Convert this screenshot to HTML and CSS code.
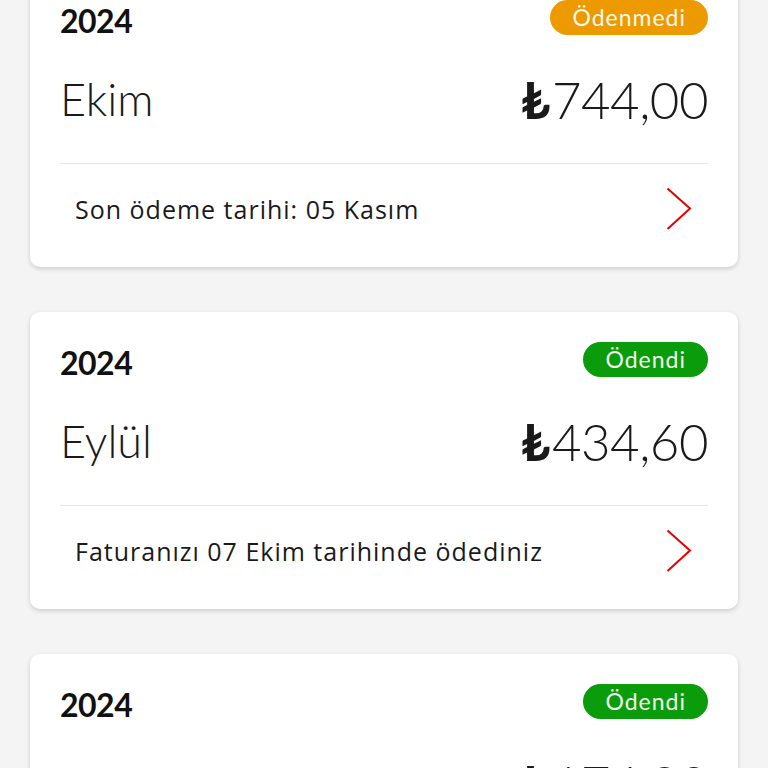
FILE: index.html
```html
<!DOCTYPE html>
<html lang="tr">
<head>
<meta charset="utf-8">
<title>Faturalar</title>
<link rel="stylesheet" href="styles.css">
</head>
<body>
<div class="list">
  <div class="card">
    <div class="head">
      <span class="year">2024</span>
      <span class="badge unpaid">Ödenmedi</span>
    </div>
    <div class="main">
      <span class="month">Ekim</span>
      <span class="amount"><b class="cur">₺</b>744,00</span>
    </div>
    <div class="foot">
      <span class="note">Son ödeme tarihi: 05 Kasım</span>
      <svg class="chev" width="26" height="44" viewBox="0 0 26 44"><path d="M1.5 1.5 L24 21.5 L1.5 42" fill="none" stroke="#e60000" stroke-width="2"/></svg>
    </div>
  </div>
  <div class="card">
    <div class="head">
      <span class="year">2024</span>
      <span class="badge paid">Ödendi</span>
    </div>
    <div class="main">
      <span class="month">Eylül</span>
      <span class="amount"><b class="cur">₺</b>434,60</span>
    </div>
    <div class="foot">
      <span class="note">Faturanızı 07 Ekim tarihinde ödediniz</span>
      <svg class="chev" width="26" height="44" viewBox="0 0 26 44"><path d="M1.5 1.5 L24 21.5 L1.5 42" fill="none" stroke="#e60000" stroke-width="2"/></svg>
    </div>
  </div>
  <div class="card">
    <div class="head">
      <span class="year">2024</span>
      <span class="badge paid">Ödendi</span>
    </div>
    <div class="main">
      <span class="month">Ağustos</span>
      <span class="amount"><b class="cur">₺</b>174,90</span>
    </div>
    <div class="foot">
      <span class="note">Faturanızı 06 Eylül tarihinde ödediniz</span>
      <svg class="chev" width="26" height="44" viewBox="0 0 26 44"><path d="M1.5 1.5 L24 21.5 L1.5 42" fill="none" stroke="#e60000" stroke-width="2"/></svg>
    </div>
  </div>
</div>
</body>
</html>
```
FILE: styles.css
```css
html, body {
  margin: 0;
  padding: 0;
  background: #f4f4f4;
  font-family: Lato, "Open Sans", "DejaVu Sans", sans-serif;
  color: #1a1a1a;
  overflow: hidden;
}
.list {
  display: flex;
  flex-direction: column;
  gap: 45px;
  padding: 0 30px;
  margin-top: -30px;
}
.card {
  background: #fff;
  border-radius: 10px;
  box-shadow: 0 2px 5px rgba(0, 0, 0, 0.16);
  padding: 30px 30px 14px;
}
.head {
  display: flex;
  justify-content: space-between;
  align-items: center;
  height: 35px;
}
.year {
  font-size: 32px;
  font-weight: 700;
  letter-spacing: -0.5px;
  padding-top: 5px;
  color: #111;
}
.badge {
  height: 35px;
  line-height: 34px;
  border-radius: 18px;
  padding: 0 22px;
  font-size: 23px;
  letter-spacing: 1px;
  color: #f2f7ee;
}
.unpaid { background: #ec9a00; }
.paid { background: #0a9c0a; }
.main {
  display: flex;
  justify-content: space-between;
  align-items: center;
  height: 128px;
}
.month {
  font-size: 45px;
  font-weight: 300;
}
.amount {
  font-size: 51px;
  font-weight: 300;
  letter-spacing: -0.5px;
}
.cur {
  font-weight: 700;
  margin-right: 2px;
}
.foot {
  display: flex;
  justify-content: space-between;
  align-items: center;
  height: 89px;
  border-top: 1px solid #e6e6e6;
  padding: 0 16px 0 15px;
}
.note {
  font-family: "Open Sans", Lato, sans-serif;
  font-size: 25px;
  font-weight: 400;
  letter-spacing: 1px;
}
.chev {
  display: block;
}
```
